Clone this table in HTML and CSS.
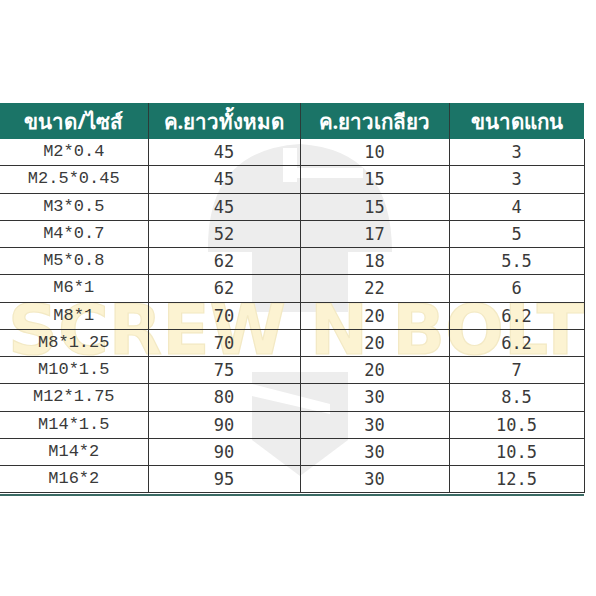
FILE: index.html
```html
<!DOCTYPE html>
<html lang="th">
<head>
<meta charset="utf-8">
<title>ขนาดสกรู</title>
<link rel="stylesheet" href="styles.css">
</head>
<body>
<div class="page">
  <svg class="mark" viewBox="0 0 596 596" width="596" height="596" aria-hidden="true">
    <g class="logo">
      <path d="M208,252 Q206,150 300,144 Q392,150 392,252 Z"/>
      <rect x="252" y="252" width="96" height="60"/>
      <polygon points="252,372 348,372 348,440 300,476 252,440"/>
    </g>
    <g class="slot">
      <rect x="283" y="148" width="14" height="34"/>
      <rect x="283" y="168" width="80" height="10"/>
      <polygon points="252,384 330,404 330,414 252,396"/>
    </g>
    <text class="brand" x="8" y="354" textLength="576" lengthAdjust="spacingAndGlyphs">SCREW N BOLT</text>
  </svg>
  <div class="frame">
    <table class="sizes">
      <colgroup>
        <col class="c1"><col class="c2"><col class="c3"><col class="c4">
      </colgroup>
      <thead>
        <tr><th>ขนาด/ไซส์</th><th>ค.ยาวทั้งหมด</th><th>ค.ยาวเกลียว</th><th>ขนาดแกน</th></tr>
      </thead>
      <tbody>
        <tr><td class="m">M2*0.4</td><td>45</td><td>10</td><td>3</td></tr>
        <tr><td class="m">M2.5*0.45</td><td>45</td><td>15</td><td>3</td></tr>
        <tr><td class="m">M3*0.5</td><td>45</td><td>15</td><td>4</td></tr>
        <tr><td class="m">M4*0.7</td><td>52</td><td>17</td><td>5</td></tr>
        <tr><td class="m">M5*0.8</td><td>62</td><td>18</td><td>5.5</td></tr>
        <tr><td class="m">M6*1</td><td>62</td><td>22</td><td>6</td></tr>
        <tr><td class="m">M8*1</td><td>70</td><td>20</td><td>6.2</td></tr>
        <tr><td class="m">M8*1.25</td><td>70</td><td>20</td><td>6.2</td></tr>
        <tr><td class="m">M10*1.5</td><td>75</td><td>20</td><td>7</td></tr>
        <tr><td class="m">M12*1.75</td><td>80</td><td>30</td><td>8.5</td></tr>
        <tr><td class="m">M14*1.5</td><td>90</td><td>30</td><td>10.5</td></tr>
        <tr><td class="m">M14*2</td><td>90</td><td>30</td><td>10.5</td></tr>
        <tr><td class="m">M16*2</td><td>95</td><td>30</td><td>12.5</td></tr>
      </tbody>
    </table>
  </div>
</div>
</body>
</html>
```
FILE: styles.css
```css
html, body {
  margin: 0;
  padding: 0;
  background: #ffffff;
}
.page {
  position: relative;
  width: 596px;
  height: 596px;
  overflow: hidden;
  padding-top: 103px;
  box-sizing: border-box;
}
.mark {
  position: absolute;
  left: 0;
  top: 0;
  z-index: 0;
}
.logo {
  fill: #ededed;
}
.slot {
  fill: #ffffff;
}
.brand {
  font-family: "DejaVu Sans", sans-serif;
  font-weight: bold;
  font-size: 70px;
  fill: #fcf3d2;
  stroke: #f3e9c4;
  stroke-width: 1.2;
}
.frame {
  position: relative;
  z-index: 1;
  width: 584px;
  border-bottom: 2px solid #3a6a64;
  padding-bottom: 1px;
}
.sizes {
  width: 584px;
  table-layout: fixed;
  border-collapse: collapse;
}
.c1 { width: 148px; }
.c2 { width: 152px; }
.c3 { width: 149px; }
.c4 { width: 135px; }
.sizes th {
  height: 36px;
  padding: 0;
  background: #1b7467;
  color: #ffffff;
  font-family: "Noto Sans", "DejaVu Sans", sans-serif;
  font-weight: bold;
  font-size: 20.5px;
  text-align: center;
  border-left: 1.5px solid #2b3b38;
}
.sizes th:first-child {
  border-left: none;
}
.sizes td {
  height: 26.25px;
  padding: 0;
  text-align: center;
  color: #3a3a3a;
  font-family: "DejaVu Sans Mono", monospace;
  font-size: 17px;
  line-height: 20px;
  border: 1.5px solid #333333;
  border-top: none;
  background: transparent;
}
.sizes td:first-child {
  border-left: none;
}
.sizes td.m {
  font-family: "Liberation Mono", monospace;
  font-size: 17px;
}
```
